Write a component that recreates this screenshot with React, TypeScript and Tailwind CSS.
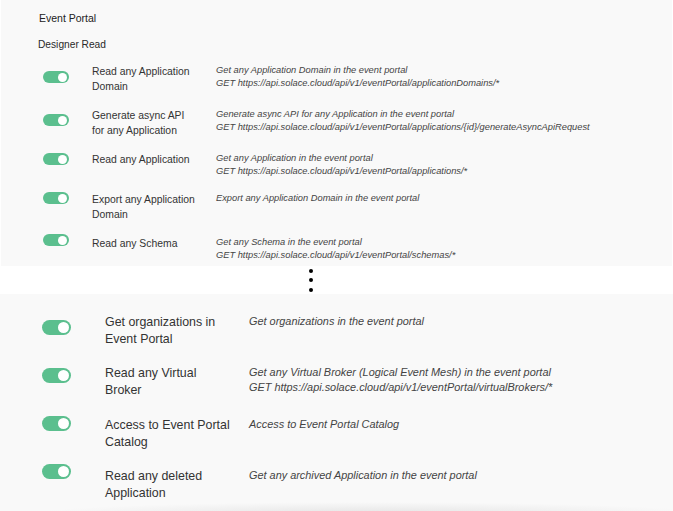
import React from "react";

type Row = { label: string[]; desc: string[]; mt: string };

const topRows: Row[] = [
  {
    label: ["Read any Application", "Domain"],
    desc: [
      "Get any Application Domain in the event portal",
      "GET https://api.solace.cloud/api/v1/eventPortal/applicationDomains/*",
    ],
    mt: "mt-[7px]",
  },
  {
    label: ["Generate async API", "for any Application"],
    desc: [
      "Generate async API for any Application in the event portal",
      "GET https://api.solace.cloud/api/v1/eventPortal/applications/{id}/generateAsyncApiRequest",
    ],
    mt: "mt-[6px]",
  },
  {
    label: ["Read any Application"],
    desc: [
      "Get any Application in the event portal",
      "GET https://api.solace.cloud/api/v1/eventPortal/applications/*",
    ],
    mt: "mt-[1px]",
  },
  {
    label: ["Export any Application", "Domain"],
    desc: ["Export any Application Domain in the event portal"],
    mt: "mt-0",
  },
  {
    label: ["Read any Schema"],
    desc: [
      "Get any Schema in the event portal",
      "GET https://api.solace.cloud/api/v1/eventPortal/schemas/*",
    ],
    mt: "-mt-[2px]",
  },
];

const bottomRows: Row[] = [
  {
    label: ["Get organizations in", "Event Portal"],
    desc: ["Get organizations in the event portal"],
    mt: "mt-[6px]",
  },
  {
    label: ["Read any Virtual", "Broker"],
    desc: [
      "Get any Virtual Broker (Logical Event Mesh) in the event portal",
      "GET https://api.solace.cloud/api/v1/eventPortal/virtualBrokers/*",
    ],
    mt: "mt-[3px]",
  },
  {
    label: ["Access to Event Portal", "Catalog"],
    desc: ["Access to Event Portal Catalog"],
    mt: "-mt-[1px]",
  },
  {
    label: ["Read any deleted", "Application"],
    desc: ["Get any archived Application in the event portal"],
    mt: "-mt-[4px]",
  },
];

function SmallToggle({ mt }: { mt: string }) {
  return (
    <div
      className={`${mt} w-[26px] h-[12px] rounded-full bg-[#5bbf8e] flex items-center justify-end pr-[2px] shrink-0`}
    >
      <div className="w-[9px] h-[9px] rounded-full bg-white" />
    </div>
  );
}

function BigToggle({ mt }: { mt: string }) {
  return (
    <div
      className={`${mt} w-[29px] h-[15px] rounded-full bg-[#5bbf8e] flex items-center justify-end pr-[2px] shrink-0`}
    >
      <div className="w-[11px] h-[11px] rounded-full bg-white" />
    </div>
  );
}

export default function App() {
  return (
    <div
      className="w-[673px] h-[511px] bg-white overflow-hidden flex flex-col"
      style={{ fontFamily: '"Liberation Sans", Arial, sans-serif' }}
    >
      {/* Top panel */}
      <div className="h-[266px] mx-[1px] bg-[#f9f9f9] pt-[11px] flex flex-col shrink-0">
        <div className="ml-[38px] text-[10.5px] leading-[15px] text-[#222]">Event Portal</div>
        <div className="ml-[37px] mt-[11px] text-[10.2px] leading-[15px] text-[#2a2a2a]">
          Designer Read
        </div>
        <div className="mt-[12px] flex flex-col gap-[14px]">
          {topRows.map((r, i) => (
            <div key={i} className="flex items-start">
              <div className="w-[91px] pl-[42px] flex shrink-0">
                <SmallToggle mt={r.mt} />
              </div>
              <div className="w-[124px] shrink-0 text-[10.4px] leading-[15px] text-[#333]">
                {r.label.map((l, j) => (
                  <div key={j} className="whitespace-nowrap">
                    {l}
                  </div>
                ))}
              </div>
              <div className="text-[9.3px] leading-[13px] italic text-[#444]">
                {r.desc.map((d, j) => (
                  <div key={j} className="whitespace-nowrap">
                    {d}
                  </div>
                ))}
              </div>
            </div>
          ))}
        </div>
      </div>

      {/* Ellipsis */}
      <div className="h-[28px] shrink-0 flex items-center pl-[309px]">
        <div className="flex flex-col gap-[5.5px]">
          <div className="w-[4px] h-[4px] rounded-full bg-black" />
          <div className="w-[4px] h-[4px] rounded-full bg-black" />
          <div className="w-[4px] h-[4px] rounded-full bg-black" />
        </div>
      </div>

      {/* Bottom panel */}
      <div className="flex-1 bg-[#f9f9f9] flex flex-col pt-[19.5px]">
        <div className="flex flex-col gap-[17.5px]">
          {bottomRows.map((r, i) => (
            <div key={i} className="flex items-start">
              <div className="w-[105px] pl-[42px] flex shrink-0">
                <BigToggle mt={r.mt} />
              </div>
              <div className="w-[144px] shrink-0 text-[12.4px] leading-[17px] text-[#333]">
                {r.label.map((l, j) => (
                  <div key={j} className="whitespace-nowrap">
                    {l}
                  </div>
                ))}
              </div>
              <div className="text-[10.9px] leading-[15px] italic text-[#444]">
                {r.desc.map((d, j) => (
                  <div key={j} className="whitespace-nowrap">
                    {d}
                  </div>
                ))}
              </div>
            </div>
          ))}
        </div>
        <div className="mt-auto h-[12px] bg-[radial-gradient(ellipse_50%_100%_at_55%_100%,#e4e4e4_0%,#f9f9f9_100%)]" />
      </div>
    </div>
  );
}
